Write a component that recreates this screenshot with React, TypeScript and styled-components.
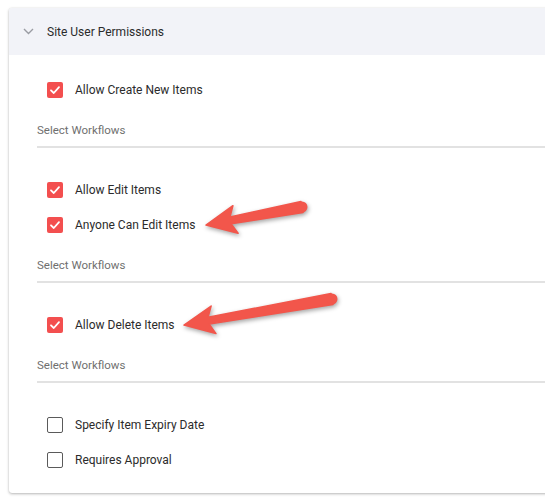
import React from 'react';
import styled, { createGlobalStyle } from 'styled-components';

const GlobalStyle = createGlobalStyle`
  body {
    margin: 0;
    background: #ffffff;
    font-family: Roboto, "Liberation Sans", Arial, sans-serif;
    overflow: hidden;
  }
`;

type Point = { x: number; y: number };

const ARROWS: { tail: Point; tip: Point }[] = [
  { tail: { x: 302, y: 207 }, tip: { x: 206, y: 225 } },
  { tail: { x: 332, y: 299 }, tip: { x: 184, y: 325 } },
];

const arrowPoints = (tail: Point, tip: Point) => {
  const dx = tip.x - tail.x;
  const dy = tip.y - tail.y;
  const len = Math.hypot(dx, dy);
  const ux = dx / len;
  const uy = dy / len;
  const nx = -uy;
  const ny = ux;
  const headLen = 30;
  const headHalf = 14;
  const sweep = 5;
  const at = (along: number, side: number) =>
    `${tail.x + ux * along + nx * side},${tail.y + uy * along + ny * side}`;
  const base = len - headLen;
  return [
    at(0, 5.5),
    at(base + sweep, 3.5),
    at(base, headHalf),
    at(len, 0),
    at(base, -headHalf),
    at(base + sweep, -3.5),
    at(0, -5.5),
  ].join(' ');
};

const sections = [
  { rows: [{ label: 'Allow Create New Items', checked: true }], workflows: true },
  {
    rows: [
      { label: 'Allow Edit Items', checked: true },
      { label: 'Anyone Can Edit Items', checked: true },
    ],
    workflows: true,
  },
  { rows: [{ label: 'Allow Delete Items', checked: true }], workflows: true },
  {
    rows: [
      { label: 'Specify Item Expiry Date', checked: false },
      { label: 'Requires Approval', checked: false },
    ],
    workflows: false,
  },
];

const CheckBox: React.FC<{ checked: boolean }> = ({ checked }) => (
  <Box $checked={checked}>
    {checked && (
      <svg width="12" height="12" viewBox="0 0 12 12">
        <path d="M2 6.3 L4.8 9 L10 3.2" fill="none" stroke="#fff" strokeWidth="1.8" strokeLinecap="round" strokeLinejoin="round" />
      </svg>
    )}
  </Box>
);

const App: React.FC = () => (
  <>
    <GlobalStyle />
    <Page>
      <Card>
        <Header>
          <svg width="11" height="7" viewBox="0 0 11 7">
            <path d="M1 1 L5.5 5.5 L10 1" fill="none" stroke="#9a9ca3" strokeWidth="1.4" />
          </svg>
          <Title>Site User Permissions</Title>
        </Header>
        <Body>
          {sections.map((section, i) => (
            <Group key={i} $first={i === 0}>
              {section.rows.map((row) => (
                <Row key={row.label}>
                  <CheckBox checked={row.checked} />
                  <Label>{row.label}</Label>
                </Row>
              ))}
              {section.workflows && <Workflows>Select Workflows</Workflows>}
            </Group>
          ))}
        </Body>
      </Card>
      <Overlay width="545" height="500">
        {ARROWS.map((a, i) => (
          <g key={i}>
            <polygon points={arrowPoints(a.tail, a.tip)} fill="#f2564b" strokeLinejoin="round" stroke="#f2564b" strokeWidth="1.5" />
            <circle cx={a.tail.x} cy={a.tail.y} r="5.5" fill="#f2564b" />
          </g>
        ))}
      </Overlay>
    </Page>
  </>
);

const Page = styled.div`
  position: relative;
  padding: 8px 0 7px 9px;
  width: 545px;
  height: 500px;
  box-sizing: border-box;
`;

const Card = styled.div`
  width: 560px;
  background: #fff;
  border-radius: 3px;
  box-shadow: 0 1px 3px rgba(0, 0, 0, 0.28), 0 0 1px rgba(0, 0, 0, 0.12);
  overflow: hidden;
`;

const Header = styled.div`
  display: flex;
  align-items: center;
  height: 47px;
  padding-left: 14px;
  background: #f2f3f8;
  gap: 13px;
`;

const Title = styled.span`
  font-size: 12px;
  color: #2b2b2b;
`;

const Body = styled.div`
  padding: 17px 0 16px 28px;
`;

const Group = styled.div<{ $first: boolean }>`
  margin-top: ${(p) => (p.$first ? 0 : 24)}px;
`;

const Row = styled.div`
  display: flex;
  align-items: center;
  height: 35px;
  padding-left: 10px;
  gap: 12px;
`;

const Box = styled.span<{ $checked: boolean }>`
  display: inline-flex;
  align-items: center;
  justify-content: center;
  width: 16px;
  height: 16px;
  box-sizing: border-box;
  border-radius: 2px;
  background: ${(p) => (p.$checked ? '#f34f4f' : '#fff')};
  border: ${(p) => (p.$checked ? 'none' : '1.5px solid #5a5a5a')};
`;

const Label = styled.span`
  font-size: 12px;
  color: #2b2b2b;
`;

const Workflows = styled.div`
  padding: 15px 0 8px;
  font-size: 11.5px;
  line-height: 16px;
  color: #6f6f6f;
  border-bottom: 2px solid #e2e2e2;
`;

const Overlay = styled.svg`
  position: absolute;
  left: 0;
  top: 0;
  pointer-events: none;
  filter: drop-shadow(1px 2px 2px rgba(0, 0, 0, 0.35));
`;

export default App;
